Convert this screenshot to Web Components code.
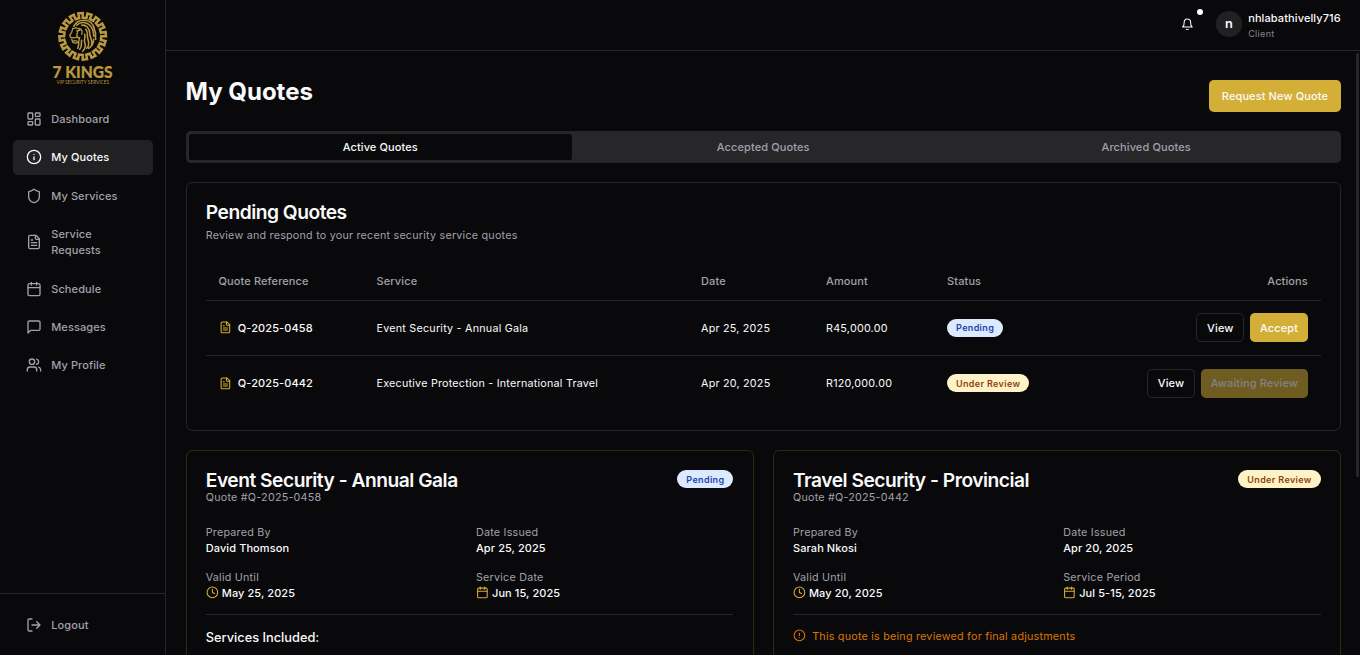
<!DOCTYPE html>
<html lang="en">
<head>
<meta charset="utf-8">
<title>My Quotes</title>
<style>
html{font-size:12.8px;--bg:#09090b;--fg:#fafafa;--muted:#a1a1aa;--line:#27272a;--gold:#d4af37;--reg:10.75px;--reg-ls:.222px}
body{margin:0;height:655px;overflow:hidden;background:var(--bg);color:var(--fg);font-family:Inter,"Liberation Sans",sans-serif;font-size:11px;letter-spacing:.105px;line-height:1.25rem}
</style>
</head>
<body>
<app-shell>
  <side-bar slot="side">
    <nav-item icon="dashboard">Dashboard</nav-item>
    <nav-item icon="info" active>My Quotes</nav-item>
    <nav-item icon="shield">My Services</nav-item>
    <nav-item icon="file">Service Requests</nav-item>
    <nav-item icon="calendar">Schedule</nav-item>
    <nav-item icon="message">Messages</nav-item>
    <nav-item icon="users">My Profile</nav-item>
    <nav-item slot="foot" icon="logout">Logout</nav-item>
  </side-bar>
  <top-bar slot="top" name="nhlabathivelly716" role-name="Client"></top-bar>
  <page-title><span>My Quotes</span><ui-button slot="action" size="md">Request New Quote</ui-button></page-title>
  <tab-bar></tab-bar>
  <quotes-table></quotes-table>
  <card-grid>
    <quote-card heading="Event Security - Annual Gala" ref="Q-2025-0458" status="pending" by="David Thomson" issued="Apr 25, 2025" valid="May 25, 2025" period-label="Service Date" period="Jun 15, 2025"><span class="inc">Services Included:</span></quote-card>
    <quote-card heading="Travel Security - Provincial" ref="Q-2025-0442" status="review" by="Sarah Nkosi" issued="Apr 20, 2025" valid="May 20, 2025" period-label="Service Period" period="Jul 5-15, 2025"><review-note>This quote is being reviewed for final adjustments</review-note></quote-card>
  </card-grid>
</app-shell>
<style>.inc{display:block;font-size:1rem;line-height:1.5rem;font-weight:500;letter-spacing:0}</style>
<script>
const ICONS={
dashboard:'<rect width="7" height="9" x="3" y="3" rx="1"/><rect width="7" height="5" x="14" y="3" rx="1"/><rect width="7" height="9" x="14" y="12" rx="1"/><rect width="7" height="5" x="3" y="16" rx="1"/>',
info:'<circle cx="12" cy="12" r="10"/><path d="M12 16v-4M12 8h.01"/>',
alert:'<circle cx="12" cy="12" r="10"/><path d="M12 8v4M12 16h.01"/>',
shield:'<path d="M20 13c0 5-3.5 7.5-7.66 8.95a1 1 0 0 1-.67-.01C7.5 20.5 4 18 4 13V6a1 1 0 0 1 1-1c2 0 4.5-1.2 6.24-2.72a1.17 1.17 0 0 1 1.52 0C14.51 3.81 17 5 19 5a1 1 0 0 1 1 1z"/>',
file:'<path d="M15 2H6a2 2 0 0 0-2 2v16a2 2 0 0 0 2 2h12a2 2 0 0 0 2-2V7Z"/><path d="M14 2v4a2 2 0 0 0 2 2h4M10 9H8M16 13H8M16 17H8"/>',
calendar:'<path d="M8 2v4M16 2v4M3 10h18"/><rect width="18" height="18" x="3" y="4" rx="2"/>',
message:'<path d="M21 15a2 2 0 0 1-2 2H7l-4 4V5a2 2 0 0 1 2-2h14a2 2 0 0 1 2 2z"/>',
users:'<path d="M16 21v-2a4 4 0 0 0-4-4H6a4 4 0 0 0-4 4v2"/><circle cx="9" cy="7" r="4"/><path d="M22 21v-2a4 4 0 0 0-3-3.87M16 3.13a4 4 0 0 1 0 7.75"/>',
logout:'<path d="M9 21H5a2 2 0 0 1-2-2V5a2 2 0 0 1 2-2h4"/><path d="m16 17 5-5-5-5M21 12H9"/>',
clock:'<circle cx="12" cy="12" r="10"/><path d="M12 6v6l4 2"/>',
bell:'<path d="M6 8a6 6 0 0 1 12 0c0 7 3 9 3 9H3s3-2 3-9"/><path d="M10.3 21a1.940 1.940 0 0 0 3.400 0"/>'
};
function define(name,render){
  customElements.define(name,class extends HTMLElement{
    connectedCallback(){
      if(this.shadowRoot)return;
      this.attachShadow({mode:'open'}).innerHTML=render(k=>this.getAttribute(k)||'',this);
    }
  });
}
define('ui-icon',a=>`<style>:host{display:block;flex:none;width:var(--size,1.25rem);height:var(--size,1.25rem)}svg{display:block;width:100%;height:100%}</style>
<svg viewBox="0 0 24 24" fill="none" stroke="currentColor" stroke-width="2" stroke-linecap="round" stroke-linejoin="round">${ICONS[a('name')]}</svg>`);

define('app-shell',()=>`<style>
:host{display:grid;grid-template-columns:13rem minmax(0,1fr);height:655.2px}
.col{display:flex;flex-direction:column;min-height:0;position:relative}
main{flex:1;min-height:0;overflow:hidden;padding:2rem 1.5rem 0}
.thumb{position:absolute;right:1px;top:53px;width:3px;height:424px;border-radius:2px;background:#27272a}
</style><slot name="side"></slot><div class="col"><slot name="top"></slot><main><slot></slot></main><i class="thumb"></i></div>`);

define('nav-item',a=>`<style>
:host{display:flex;align-items:center;gap:.75rem;padding:.75rem 1rem;border-radius:.375rem;color:var(--muted);font-weight:500}
:host([active]){background:#212124;color:var(--fg)}
</style><ui-icon name="${a('icon')}"></ui-icon><span><slot></slot></span>`);

define('brand-logo',()=>{
  const n=16,ri=18.6,ro=23.3,p=(r,t)=>(r*Math.cos(t)).toFixed(2)+' '+(r*Math.sin(t)).toFixed(2);
  let d='';
  for(let i=0;i<n;i++){
    const s=2*Math.PI/n,t=i*s;
    d+=`${i?'L':'M'}${p(ri,t)}L${p(ri,t+s*.52)}L${p(ro,t+s*.52)}L${p(ro,t+s)}`;
  }
  return `<style>:host{display:block;width:68px;height:76px}svg{display:block;overflow:visible}text{font-family:Lato,"Open Sans",sans-serif;letter-spacing:0;fill:#b9983f}</style>
<svg width="68" height="76" viewBox="0 0 68 76">
<g transform="translate(33.700 26.300)" fill="none" stroke="#b9983f">
<path d="${d}Z" stroke-width="2.500" stroke-linejoin="miter"/>
<g stroke-width="1.600" stroke-linecap="round">
<path d="M-9-10c2-4 6-6 10-6 6 0 10 4 11 10M-6-11c3-3 8-4 12-1 4 3 5 7 5 12M-1-11c4-1 8 3 8 8 0 4 3 6 2 11M3-7c3 3 1 6 2 9 1 4 2 7-1 10M12-6c2 4 0 6 1 9M2-2c1 3-1 5 0 8s1 6-2 9M-1 4c-1 3 1 6-2 9M-4 6c0 2 0 4-1 6M11 3c0 4-2 7-5 9"/>
<path stroke-width="1.300" d="M-10-8l-1 4-2 3 1 2 3 .5 3-.5M-11 3l1 3 3 1 3-2 1-4M-9-8c3-1 5 0 6 2l-3 .5M-5-5l-1 4 2 3M-10 4.500h4M-3-8c2 1 3 3 2 6"/>
</g></g>
<text x="3.500" y="67.700" font-size="16.400" font-weight="900" stroke="#b9983f" stroke-width=".2" textLength="60" lengthAdjust="spacingAndGlyphs">7 KINGS</text>
<text x="7.500" y="74.300" font-size="5.400" textLength="52.500" lengthAdjust="spacingAndGlyphs">VIP SECURITY SERVICES</text>
</svg>`;});

define('side-bar',()=>`<style>
:host{display:flex;flex-direction:column;box-sizing:border-box;border-right:1px solid var(--line);height:100%}
header{display:flex;justify-content:center;padding:10.200px 0 0;height:91.600px;box-sizing:border-box}
nav{flex:1;display:flex;flex-direction:column;gap:.25rem;padding:9.890px 12.200px 0 1rem}
footer{border-top:1px solid var(--line);padding:1rem}
</style><header><brand-logo></brand-logo></header><nav><slot></slot></nav><footer><slot name="foot"></slot></footer>`);

define('top-bar',a=>`<style>
:host{display:flex;justify-content:flex-end;align-items:center;box-sizing:border-box;height:4rem;padding:0 1.5rem 2px 0;border-bottom:1px solid var(--line)}
.bell{position:relative;display:flex;margin-right:22.500px;--size:1rem}
.dot{position:absolute;left:16px;top:-9px;width:6px;height:6px;border-radius:50%;background:#fff}
.av{width:2rem;height:2rem;border-radius:50%;background:#212124;display:grid;place-items:center;font-size:1rem;font-weight:600;margin-right:6.400px}
.who{display:flex;flex-direction:column}
.n{font-weight:500;line-height:1.25rem}.r{font-size:9px;letter-spacing:.33px;line-height:1rem;padding-top:1.900px;margin-bottom:-1.900px;color:#85858c}
</style><span class="bell"><ui-icon name="bell"></ui-icon><i class="dot"></i></span><span class="av">n</span><span class="who"><span class="n">${a('name')}</span><span class="r">${a('role-name')}</span></span>`);

define('page-title',()=>`<style>
:host{display:flex;justify-content:space-between;align-items:flex-start;height:35.200px;margin-bottom:1.5rem}
h1{margin:0;padding-top:.8px;font-size:1.875rem;line-height:2.25rem;font-weight:700;letter-spacing:0}
.a{padding-top:3.200px}
</style><h1><slot></slot></h1><div class="a"><slot name="action"></slot></div>`);

define('ui-button',()=>`<style>
:host{display:inline-flex;align-items:center;justify-content:center;box-sizing:border-box;height:2.25rem;padding:0 .765rem;border-radius:.375rem;background:var(--gold);color:var(--fg);font-weight:500;white-space:nowrap}
:host([size=md]){height:2.5rem;padding:0 1rem}
:host([outline]){background:var(--bg);border:1px solid var(--line)}
:host([disabled]){opacity:.5}
</style><slot></slot>`);

define('tab-bar',()=>`<style>
:host{display:grid;grid-template-columns:repeat(3,1fr);box-sizing:border-box;height:2.5rem;padding:.25rem;border-radius:.375rem;background:var(--line);color:var(--muted);font-weight:500;margin-bottom:1.5rem}
span{display:grid;place-items:center;border-radius:.2rem}
.on{background:var(--bg);color:var(--fg)}
</style><span class="on">Active Quotes</span><span>Accepted Quotes</span><span>Archived Quotes</span>`);

define('status-badge',a=>`<style>
:host{display:inline-flex;box-sizing:border-box;padding:2.400px .625rem .800px;border:1px solid transparent;border-radius:99px;font-size:9px;letter-spacing:.34px;line-height:1rem;font-weight:600;white-space:nowrap;background:#dbeafe;color:#1e40af}
:host([kind=review]){background:#fef3c7;color:#92400e}
</style>${a('kind')==='review'?'Under Review':'Pending'}`);

define('quote-row',a=>`<style>
:host{display:grid;grid-template-columns:158px 324.500px 125px 121px 1fr auto;align-items:center;box-sizing:border-box;height:55px;padding-bottom:.6px;border-bottom:1px solid var(--line);font-size:var(--reg);letter-spacing:var(--reg-ls)}
:host([last]){border:0;height:54.700px}
div{padding:0 1rem;display:flex;align-items:center}
.txt{padding-top:1.600px}
.id{font-weight:500;gap:.5rem;font-size:11px;letter-spacing:.105px}
ui-icon{--size:1rem;color:var(--gold);}
.act{gap:.465rem;font-size:11px;letter-spacing:.105px}
</style><div class="id"><ui-icon name="file"></ui-icon>${a('ref')}</div><div class="txt">${a('service')}</div><div class="txt">${a('date')}</div><div class="txt">${a('amount')}</div><div><status-badge kind="${a('status')}"></status-badge></div><div class="act"><ui-button outline>View</ui-button><slot></slot></div>`);

define('quotes-table',()=>`<style>
:host{display:block;box-sizing:border-box;border:1px solid var(--line);border-radius:.5rem;padding:1.5rem;margin-bottom:1.5rem}
h2{margin:0 0 .375rem;font-size:1.5rem;line-height:1;font-weight:600;letter-spacing:-.025em}
p{margin:0 0 17.800px;padding-top:1.400px;color:var(--muted);font-size:var(--reg);letter-spacing:var(--reg-ls)}
.head{display:grid;grid-template-columns:158px 324.500px 125px 121px 1fr auto;align-items:center;height:38.400px;border-bottom:1px solid var(--line);color:var(--muted);font-weight:500}
.head span{padding:0 1rem}
quote-row ui-button{font-size:11px;letter-spacing:.105px}
</style><h2>Pending Quotes</h2><p>Review and respond to your recent security service quotes</p>
<div class="head"><span>Quote Reference</span><span>Service</span><span>Date</span><span>Amount</span><span>Status</span><span>Actions</span></div>
<quote-row ref="Q-2025-0458" service="Event Security - Annual Gala" date="Apr 25, 2025" amount="R45,000.00" status="pending"><ui-button>Accept</ui-button></quote-row>
<quote-row last ref="Q-2025-0442" service="Executive Protection - International Travel" date="Apr 20, 2025" amount="R120,000.00" status="review"><ui-button disabled>Awaiting Review</ui-button></quote-row>`);

define('card-grid',()=>`<style>:host{display:grid;grid-template-columns:1fr 1fr;gap:1.5rem}</style><slot></slot>`);

define('quote-card',a=>`<style>
:host{display:block;box-sizing:border-box;height:420px;border:1px solid #32290f;border-radius:.5rem;padding:1.5rem}
header{display:flex;justify-content:space-between;align-items:flex-start;margin-bottom:18.500px}
h2{margin:0;padding-top:.5px;font-size:1.5rem;line-height:1;font-weight:600;letter-spacing:-.025em}
small{display:block;margin:.1px 0 -.9px;font-size:var(--reg);letter-spacing:var(--reg-ls);color:var(--muted)}
.facts{display:grid;grid-template-columns:1fr 1fr;gap:1rem;padding-bottom:13.800px;margin-bottom:1rem;border-bottom:1px solid var(--line)}
dl,dd{margin:0}dt{color:var(--muted);font-size:var(--reg);letter-spacing:var(--reg-ls);padding-top:1.200px;margin-bottom:-1.200px}
dd{display:flex;align-items:center;gap:.25rem;font-weight:500;letter-spacing:.09px}
ui-icon{--size:1rem;color:var(--gold)}
</style><header><div><h2>${a('heading')}</h2><small>Quote #${a('ref')}</small></div><status-badge kind="${a('status')}"></status-badge></header>
<div class="facts">
<dl><dt>Prepared By</dt><dd>${a('by')}</dd></dl><dl><dt>Date Issued</dt><dd>${a('issued')}</dd></dl>
<dl><dt>Valid Until</dt><dd><ui-icon name="clock"></ui-icon>${a('valid')}</dd></dl><dl><dt>${a('period-label')}</dt><dd><ui-icon name="calendar"></ui-icon>${a('period')}</dd></dl>
</div><slot></slot>`);

define('review-note',()=>`<style>:host{display:flex;align-items:flex-start;gap:.5rem;color:#d97706;--size:1rem;font-size:var(--reg);letter-spacing:var(--reg-ls)}ui-icon{margin-top:1.100px}span{padding-top:.9px}</style><ui-icon name="alert"></ui-icon><span><slot></slot></span>`);
</script>
</body>
</html>
